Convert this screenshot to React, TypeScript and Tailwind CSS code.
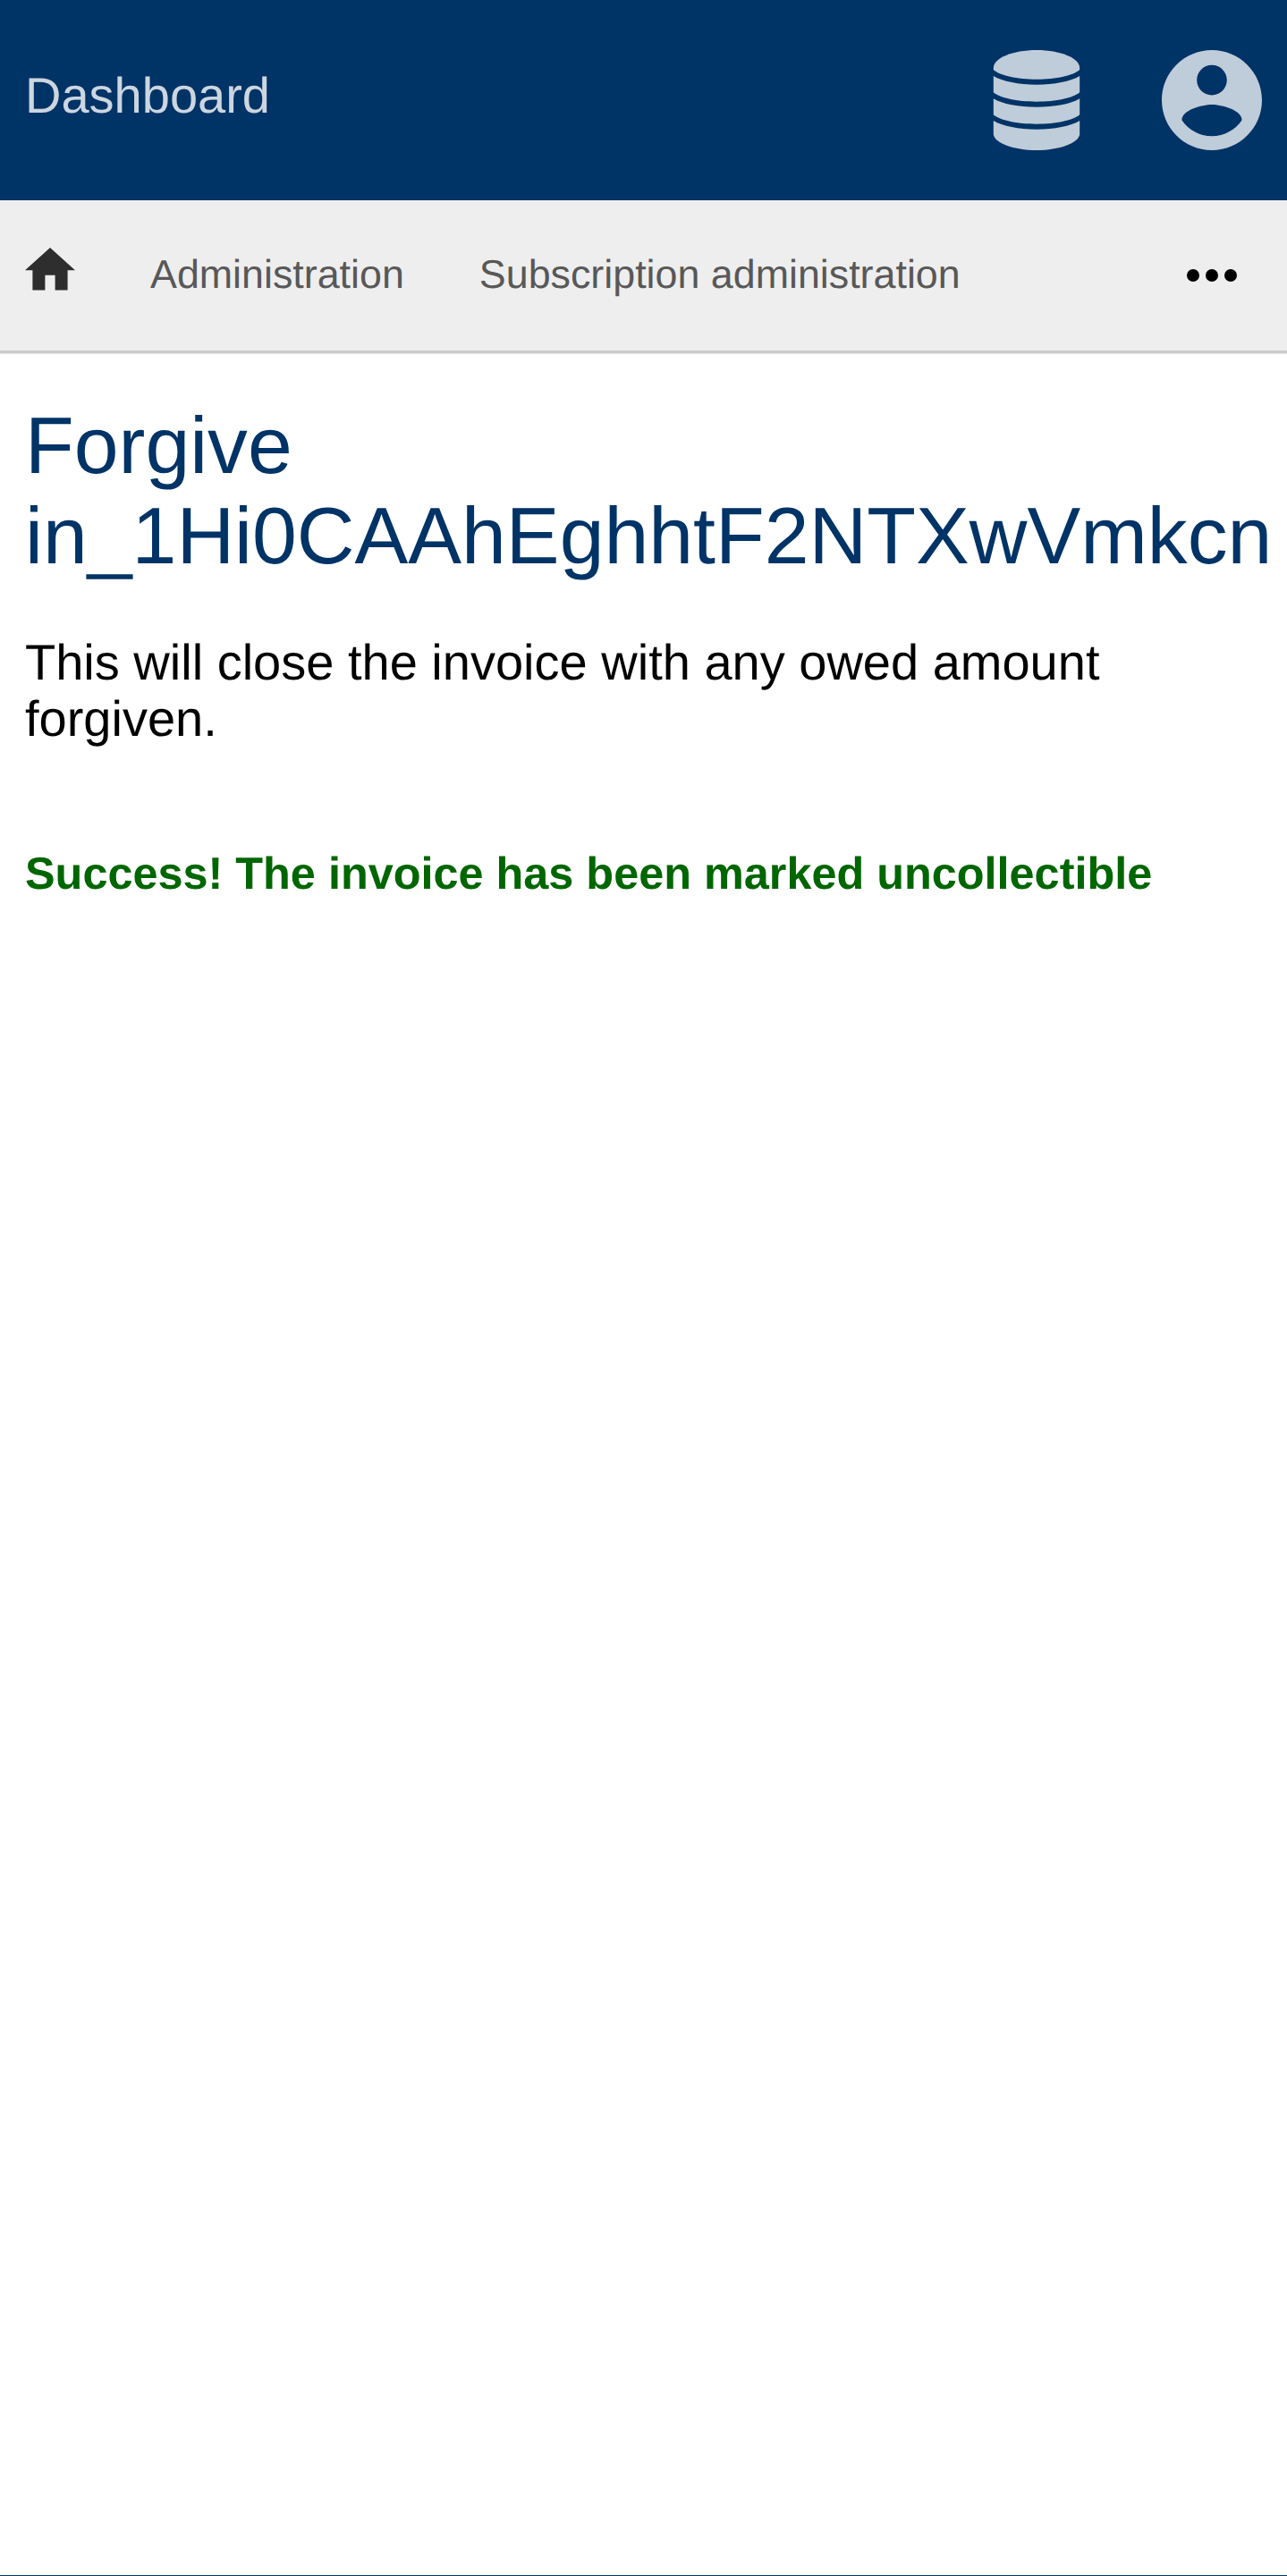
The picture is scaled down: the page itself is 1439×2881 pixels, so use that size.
function DatabaseIcon() {
  return (
    <svg className="h-28 w-[98px]" viewBox="0 0 98 112" fill="#bfccd9">
      <path d="M.8 20C.8 9 22.300 0 49 0s48.200 9 48.200 20v2C90 28.500 71 32.700 49 32.700S8 28.500.8 22z" />
      <path d="M.8 29C11 35 29 38.700 49 38.700S87 35 97.200 29v18.300C90 53.500 71 57.700 49 57.700S8 53.500.8 47.300z" />
      <path d="M.8 54.200C11 60.200 29 63.700 49 63.700S87 60.200 97.200 54.200v18.100C90 78.500 71 82.700 49 82.700S8 78.500.8 72.300z" />
      <path d="M.8 79C11 85 29 88.700 49 88.700S87 85 97.200 79v15.500C95.500 104 75 112 49 112S2.500 104 .8 94.500z" />
    </svg>
  );
}

function AccountIcon() {
  return (
    <svg className="size-28" viewBox="2 2 20 20" fill="#bfccd9">
      <path d="M12 2C6.480 2 2 6.480 2 12s4.480 10 10 10 10-4.480 10-10S17.520 2 12 2zm0 3c1.660 0 3 1.340 3 3s-1.340 3-3 3-3-1.340-3-3 1.340-3 3-3zm0 14.200c-2.500 0-4.710-1.280-6-3.220.030-1.990 4-3.080 6-3.080 1.990 0 5.970 1.090 6 3.080-1.290 1.940-3.500 3.220-6 3.220z" />
    </svg>
  );
}

function HomeIcon() {
  return (
    <svg className="mb-3.5 h-[47.6px] w-14" viewBox="2 3 20 17" fill="#2e2e2e">
      <path d="M10 20v-6h4v6h5v-8h3L12 3 2 12h3v8z" />
    </svg>
  );
}

function MoreIcon() {
  return (
    <svg className="ml-auto mr-[28.5px] h-3.5 w-14" viewBox="0 0 56 14" fill="#000">
      <circle cx="7" cy="7" r="7" />
      <circle cx="28" cy="7" r="7" />
      <circle cx="49" cy="7" r="7" />
    </svg>
  );
}

export default function App() {
  return (
    <div className="flex h-[2881px] w-[1439px] flex-col overflow-hidden border-b border-[#003366] bg-white font-['Liberation_Sans',Arial,sans-serif] text-black [text-rendering:geometricPrecision]">
      <header className="flex h-56 shrink-0 items-center bg-[#003366] pl-7 pr-[28.5px]">
        <a className="mb-[11px] text-[56px] leading-[63px] text-[#ccd6e0]">Dashboard</a>
        <div className="ml-auto flex items-center gap-[91px]">
          <DatabaseIcon />
          <AccountIcon />
        </div>
      </header>
      <nav className="flex h-[171px] shrink-0 items-center border-b-[3px] border-[#cccccc] bg-[#eeeeee] px-7 text-[44.8px] leading-[50px] text-[#585858]">
        <HomeIcon />
        <a className="mb-0.5 ml-[84px]">Administration</a>
        <a className="mb-0.5 ml-[84px]">Subscription administration</a>
        <MoreIcon />
      </nav>
      <div className="h-px shrink-0 bg-[#e5e5e5]" />
      <main className="px-7">
        <h1 className="mt-[52px] text-[89.6px] leading-[101px] text-[#003366]">
          Forgive
          <br />
          in_1Hi0CAAhEghhtF2NTXwVmkcn
        </h1>
        <p className="mt-[59px] text-[56px] leading-[63px]">This will close the invoice with any owed amount forgiven.</p>
        <p className="mt-[113px] text-[50.4px] font-bold leading-[57px] text-[#006600]">
          Success! The invoice has been marked uncollectible
        </p>
      </main>
    </div>
  );
}
